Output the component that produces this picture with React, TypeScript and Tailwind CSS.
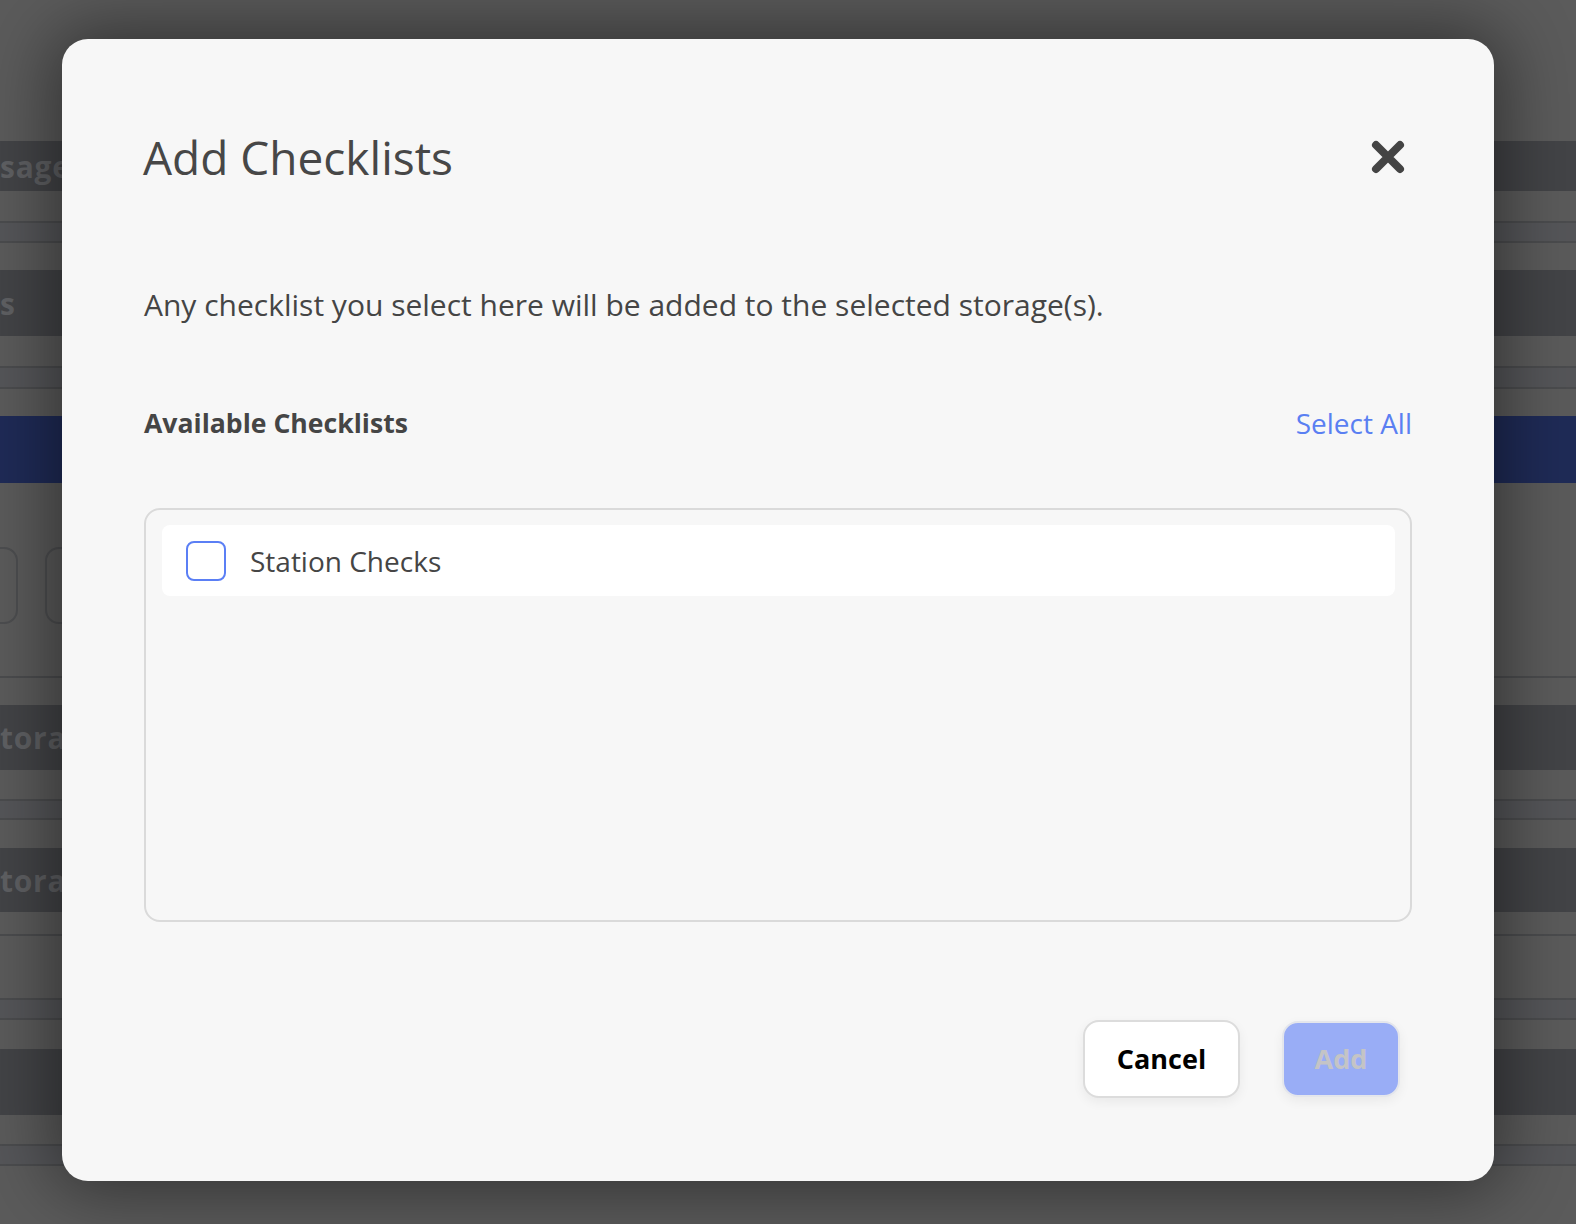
const font = { fontFamily: '"Open Sans", "Noto Sans", sans-serif' };

// Dimmed page rows that sit behind the dialog
const Line = () => <div className="h-[2px] bg-[#4b4c4e]" />;

const Band = ({ label, h }: { label: string; h: string }) => (
  <div className={`${h} bg-[#434447] flex items-center`}>
    <span className="text-[30px] font-bold tracking-wide text-[#5f6063] whitespace-nowrap">{label}</span>
  </div>
);

const Backdrop = () => (
  <div className="flex flex-col">
    <div className="h-[141px]" />
    <Band label="sage" h="h-[50px]" />
    <div className="h-[30px]" />
    <Line />
    <div className="h-[18px] bg-[#555659]" />
    <Line />
    <div className="h-[27px]" />
    <Band label="s" h="h-[66px]" />
    <div className="h-[30px]" />
    <Line />
    <div className="h-[19px] bg-[#555659]" />
    <Line />
    <div className="h-[27px]" />
    <div className="h-[67px] bg-[#1f2b57]" />
    <div className="h-[193px] flex items-start pt-[64px] gap-[27px]">
      <div className="h-[77px] w-[40px] -ml-[22px] rounded-[14px] border-2 border-[#4d4e50]" />
      <div className="h-[77px] w-[120px] rounded-[14px] border-2 border-[#4d4e50]" />
    </div>
    <Line />
    <div className="h-[27px]" />
    <Band label="torage" h="h-[65px]" />
    <div className="h-[29px]" />
    <Line />
    <div className="h-[17px] bg-[#555659]" />
    <Line />
    <div className="h-[28px]" />
    <Band label="torage" h="h-[64px]" />
    <div className="h-[22px]" />
    <Line />
    <div className="h-[62px]" />
    <Line />
    <div className="h-[18px] bg-[#555659]" />
    <Line />
    <div className="h-[29px]" />
    <div className="h-[66px] bg-[#434447]" />
    <div className="h-[29px]" />
    <Line />
    <div className="h-[18px] bg-[#555659]" />
    <Line />
  </div>
);

const AddChecklistsDialog = () => (
  <div className="w-[1432px] h-[1142px] rounded-[26px] bg-[#f7f7f7] px-[82px] pt-[88px] pb-[83px] flex flex-col shadow-[0_0_70px_10px_rgba(0,0,0,0.45)]">
    <div className="h-[60px] flex items-center justify-between">
      <h2 className="text-[46px] leading-[60px] text-[#474747] -ml-[1px]">Add Checklists</h2>
      <button className="w-[34px] h-[34px] flex items-center justify-center mr-[7px] text-[#444]">
        <svg width="34" height="34" viewBox="0 0 34 34">
          <path d="M5 5 L29 29 M29 5 L5 29" stroke="currentColor" strokeWidth="8" strokeLinecap="round" />
        </svg>
      </button>
    </div>

    <p className="mt-[98px] text-[30px] leading-[40px] text-[#454545]">
      Any checklist you select here will be added to the selected storage(s).
    </p>

    <div className="mt-[80px] h-[36px] flex items-center justify-between">
      <span className="text-[26.6px] leading-[36px] font-bold text-[#454545]">Available Checklists</span>
      <button className="text-[28px] leading-[36px] text-[#5a7ff2]">Select All</button>
    </div>

    <div className="mt-[67px] h-[414px] rounded-[16px] border-2 border-[#dadada] p-[15px] pl-[16px]">
      <label className="h-[71px] rounded-[8px] bg-white flex items-center px-[24px] gap-[24px]">
        <span className="w-[40px] h-[40px] rounded-[8px] border-2 border-[#5b7ff5] bg-white" />
        <span className="text-[28px] text-[#454545]">Station Checks</span>
      </label>
    </div>

    <div className="mt-[98px] flex justify-end gap-[42px] pr-[12px]">
      <button className="w-[157px] h-[78px] rounded-[16px] bg-white border-2 border-[#dcdcdc] text-[27px] font-bold text-black shadow-[0_4px_12px_rgba(0,0,0,0.06)]">
        Cancel
      </button>
      <button
        disabled
        className="w-[118px] h-[76px] mt-[1px] rounded-[16px] bg-[#99adf6] border-2 border-[#e4e6ec] text-[27px] font-bold text-[#c4c4c6] shadow-[0_4px_12px_rgba(0,0,0,0.06)]"
      >
        Add
      </button>
    </div>
  </div>
);

export default function App() {
  return (
    <div className="relative w-[1576px] h-[1224px] overflow-hidden bg-[#5b5b5b]" style={font}>
      <Backdrop />
      <div className="absolute inset-0 pl-[62px] pt-[39px]">
        <AddChecklistsDialog />
      </div>
    </div>
  );
}
